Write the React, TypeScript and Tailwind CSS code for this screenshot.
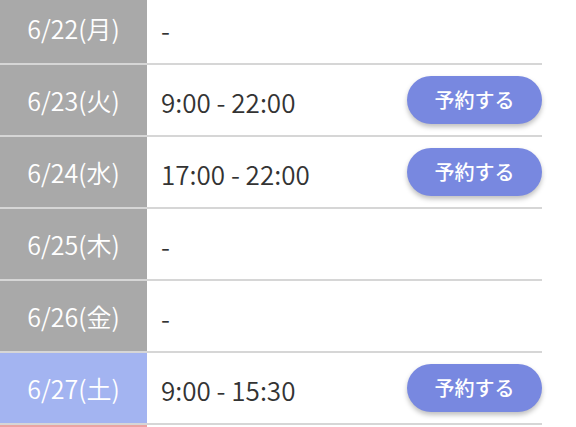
const days = [
  { date: '6/22(月)', time: '-', open: false, kind: 'weekday' },
  { date: '6/23(火)', time: '9:00 - 22:00', open: true, kind: 'weekday' },
  { date: '6/24(水)', time: '17:00 - 22:00', open: true, kind: 'weekday' },
  { date: '6/25(木)', time: '-', open: false, kind: 'weekday' },
  { date: '6/26(金)', time: '-', open: false, kind: 'weekday' },
  { date: '6/27(土)', time: '9:00 - 15:30', open: true, kind: 'sat' },
]

const dateBg: Record<string, string> = {
  weekday: 'bg-[#a9a9a9]',
  sat: 'bg-[#a3b4f1]',
}

export default function App() {
  return (
    <div
      className="h-[427px] w-[576px] overflow-hidden bg-white"
      style={{ fontFamily: '"Noto Sans CJK JP", "Noto Sans", sans-serif' }}
    >
      <div className="-mt-[7px] w-[542px]">
        {days.map((d) => (
          <div key={d.date} className="flex h-[72px] border-b-2 border-[#d6d6d6]">
            <div
              className={`flex w-[147px] shrink-0 items-center justify-center pt-[2px] text-[25px] font-[350] text-white ${dateBg[d.kind]}`}
            >
              {d.date}
            </div>
            <div className="flex flex-1 items-center justify-between pl-[14px]">
              <span className="pt-[3px] text-[26px] font-[350] text-[#333333]">{d.time}</span>
              {d.open && (
                <button className="h-[48px] w-[135px] rounded-full bg-[#7888e0] text-[20px] font-medium text-white shadow-[0_3px_5px_rgba(0,0,0,0.25)]">
                  予約する
                </button>
              )}
            </div>
          </div>
        ))}
        {/* next row (日) just peeking in at the bottom */}
        <div className="flex h-[72px]">
          <div className="w-[147px] shrink-0 bg-[#eba3a3]" />
          <div className="flex-1" />
        </div>
      </div>
    </div>
  )
}
